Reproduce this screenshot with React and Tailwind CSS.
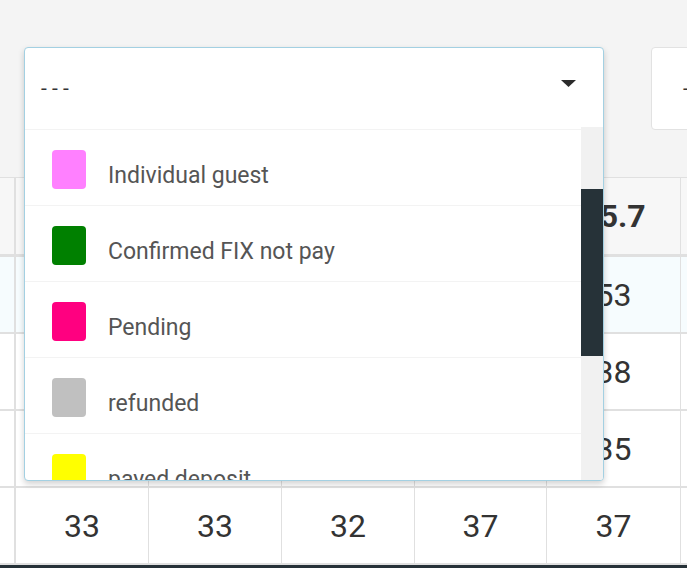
export default function App() {
  const items = [
    { color: "bg-[#ff80ff]", label: "Individual guest" },
    { color: "bg-[#008000]", label: "Confirmed FIX not pay" },
    { color: "bg-[#ff0080]", label: "Pending" },
    { color: "bg-[#c0c0c0]", label: "refunded" },
    { color: "bg-[#ffff00]", label: "payed deposit" },
  ];
  const widths = ["w-[16px] border-r-2", "w-[133px] border-r", "w-[133px] border-r", "w-[133px] border-r", "w-[132px] border-r", "w-[134px] border-r", "flex-1"];
  const rows = [
    { h: "h-[80px] border-t border-b-[3px] bg-[#f7f7f7]", vals: ["", "", "", "", "", "25.7", ""], bold: true },
    { h: "h-[77px] border-b-2 bg-[#f6fcfe]", vals: ["", "", "", "", "", "53", ""] },
    { h: "h-[77px] border-b-2 bg-white", vals: ["", "", "", "", "", "38", ""] },
    { h: "h-[77px] border-b-2 bg-white", vals: ["", "", "", "", "", "35", ""] },
    { h: "h-[77px] border-b-2 bg-white", vals: ["", "33", "33", "32", "37", "37", ""] },
  ];
  return (
    <div className="w-[687px] h-[568px] overflow-hidden bg-[#f4f4f4] flex flex-col" style={{ fontFamily: "Roboto, 'Noto Sans', sans-serif" }}>
      <div className="h-[177px] shrink-0 pt-[47px] pl-[24px] flex gap-[47px]">
        <div className="relative w-[580px] h-[83px] shrink-0">
          <div className="absolute left-0 top-0 z-10 w-[580px] h-[434px] bg-white border border-[#a3d0e2] rounded-[4px] shadow-[0_3px_6px_rgba(0,0,0,0.18)] flex flex-col overflow-hidden">
            <div className="h-[81px] shrink-0 flex items-center justify-between pl-[16px] pr-[27px]">
              <span className="text-[21px] text-[#333] mt-[1px]">- - -</span>
              <svg width="15" height="8" viewBox="0 0 15 8" className="-mt-[10px]">
                <polygon points="0,0 15,0 7.5,7" fill="#2b2b2b" />
              </svg>
            </div>
            <div className="flex-1 flex min-h-0">
              <div className="flex-1 border-t border-[#f3f3f3] overflow-hidden">
                {items.map((it) => (
                  <div key={it.label} className="h-[76px] border-b border-[#f3f3f3] flex items-start pt-[20px] pl-[27px]">
                    <div className={`w-[34px] h-[39px] rounded-[4px] shrink-0 ${it.color}`} />
                    <span className="ml-[22px] mt-[14px] text-[23px] leading-[24px] text-[#555] whitespace-nowrap">{it.label}</span>
                  </div>
                ))}
              </div>
              <div className="w-[22px] shrink-0 bg-[#f1f1f1] -mt-[2px] flex flex-col">
                <div className="mt-[62px] h-[167px] bg-[#263238]" />
              </div>
            </div>
          </div>
        </div>
        <div className="w-[80px] h-[83px] shrink-0 bg-white border border-[#e2e2e2] rounded-[4px] flex items-center pl-[31px]">
          <span className="text-[21px] text-[#333] whitespace-nowrap">- - -</span>
        </div>
      </div>
      <div className="flex flex-col">
        {rows.map((r, ri) => (
          <div key={ri} className={`flex border-[#e0e0e0] shrink-0 ${r.h}`}>
            {widths.map((w, ci) => (
              <div key={ci} className={`${w} shrink-0 border-[#e0e0e0] h-full flex items-center justify-center`}>
                <span className={`text-[32px] leading-none text-[#333] ${r.bold ? "font-bold" : ""}`}>{r.vals[ci]}</span>
              </div>
            ))}
          </div>
        ))}
      </div>
      <div className="h-[3px] bg-[#263238] shrink-0" />
    </div>
  );
}
